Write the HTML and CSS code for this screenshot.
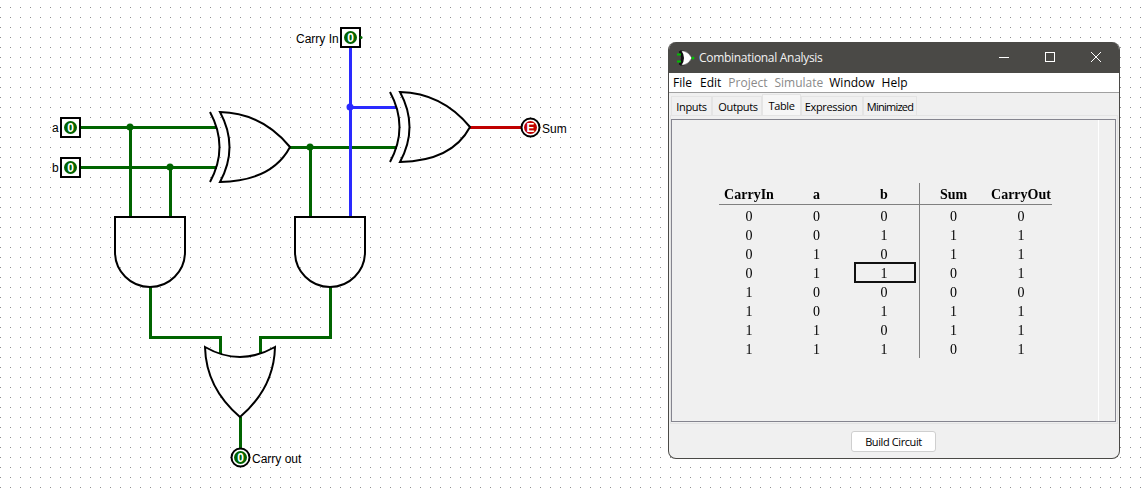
FILE: index.html
```html
<!DOCTYPE html>
<html lang="en">
<head>
<meta charset="utf-8">
<title>Full adder</title>
<link rel="stylesheet" href="styles.css">
</head>
<body>
<main class="desktop">
  <svg class="circuit" width="1147" height="493" viewBox="0 0 1147 493" xmlns="http://www.w3.org/2000/svg">
    <defs>
      <pattern id="grid" width="10" height="10" patternUnits="userSpaceOnUse" y="7">
        <rect width="1" height="1" fill="#8f8f8f"/>
      </pattern>
      <g id="xor" class="gate">
        <path d="M0 0 Q19 35 0 70"/>
        <path d="M10 0 Q29 35 10 70 Q62 69 80 35 Q52 1 10 0Z"/>
      </g>
      <g id="and" class="gate">
        <path d="M0 0H70V35A35 35 0 0 1 0 35Z"/>
      </g>
    </defs>
    <rect width="1147" height="493" fill="url(#grid)"/>

    <g class="wire wire-green">
      <path d="M80 127H217M80 167H217M130 127V217M170 167V217"/>
      <path d="M290 147H397M310 147V217"/>
      <path d="M150 287V337H220V354M330 287V337H260V354M240 417V448"/>
    </g>
    <g class="wire wire-blue"><path d="M350 47V217M350 107H397"/></g>
    <path class="wire wire-red" d="M470 127H522"/>

    <g class="node-green">
      <circle cx="130" cy="127" r="3.500"/><circle cx="170" cy="167" r="3.500"/><circle cx="310" cy="147" r="3.500"/>
    </g>
    <circle class="node-blue" cx="350" cy="107" r="3.500"/>

    <use href="#xor" x="210" y="112"/>
    <use href="#xor" x="390" y="92"/>
    <use href="#and" x="115" y="217"/>
    <use href="#and" x="295" y="217"/>
    <g class="gate"><path d="M205 347Q240 367 275 347Q274 388 240 417Q206 388 205 347Z"/></g>

    <g class="pin-box">
      <rect x="61" y="118" width="19" height="19"/>
      <rect x="61" y="158" width="19" height="19"/>
      <rect x="341" y="28" width="19" height="19"/>
    </g>
    <g class="pin-ring">
      <circle cx="240.500" cy="457.500" r="9"/>
      <circle cx="530.500" cy="127.500" r="9"/>
    </g>
    <g class="value-green">
      <circle cx="70.500" cy="127.500" r="6.500"/>
      <circle cx="70.500" cy="167.500" r="6.500"/>
      <circle cx="350.500" cy="37.500" r="6.500"/>
      <circle cx="240.500" cy="457.500" r="6.500"/>
      <circle cx="361" cy="37.500" r="1.500"/>
    </g>
    <circle class="value-red" cx="530.500" cy="127.500" r="6.500"/>

    <g class="value-text">
      <text x="70.500" y="132">0</text>
      <text x="70.500" y="172">0</text>
      <text x="350.500" y="42">0</text>
      <text x="240.500" y="462">0</text>
      <text x="530.500" y="132">E</text>
    </g>
    <g class="label">
      <text x="52" y="132">a</text>
      <text x="52" y="172">b</text>
      <text x="296" y="43">Carry In</text>
      <text x="542" y="133">Sum</text>
      <text x="252" y="463">Carry out</text>
    </g>
  </svg>

  <section class="window">
    <header class="titlebar">
      <svg class="app-icon" width="18" height="16" viewBox="0 0 18 16" xmlns="http://www.w3.org/2000/svg">
        <path d="M3 1H7Q12 2 15 8Q12 14 7 15H3Q7 8 3 1Z" fill="#fff" stroke="#111" stroke-width="0.500"/>
        <path d="M3 1Q8 8 3 15" fill="none" stroke="#111" stroke-width="3"/>
        <path d="M0 4.500H4M0 11.500H4" stroke="#00c000" stroke-width="2"/>
        <circle cx="16" cy="8" r="1.500" fill="#00c000"/>
      </svg>
      <h1 class="title">Combinational Analysis</h1>
      <div class="controls">
        <svg class="control" width="46" height="31" viewBox="0 0 46 31" xmlns="http://www.w3.org/2000/svg"><path d="M18 15.500H28"/></svg>
        <svg class="control" width="46" height="31" viewBox="0 0 46 31" xmlns="http://www.w3.org/2000/svg"><rect x="18.500" y="10.500" width="9" height="9"/></svg>
        <svg class="control" width="46" height="31" viewBox="0 0 46 31" xmlns="http://www.w3.org/2000/svg"><path d="M18 10L28 20M28 10L18 20"/></svg>
      </div>
    </header>
    <nav class="menubar">
      <span class="menu menu-file">File</span>
      <span class="menu">Edit</span>
      <span class="menu menu-off">Project</span>
      <span class="menu menu-off menu-sim">Simulate</span>
      <span class="menu">Window</span>
      <span class="menu">Help</span>
    </nav>
    <div class="tabs">
      <span class="tab tab-inputs">Inputs</span>
      <span class="tab tab-outputs">Outputs</span>
      <span class="tab tab-active">Table</span>
      <span class="tab tab-expr">Expression</span>
      <span class="tab tab-min">Minimized</span>
    </div>
    <div class="tabpanel">
      <div class="pane">
        <div class="view">
          <div class="truth">
            <div class="row row-head"><span>CarryIn</span><span>a</span><span>b</span><span>Sum</span><span>CarryOut</span></div>
            <div class="row"><span>0</span><span>0</span><span>0</span><span>0</span><span>0</span></div>
            <div class="row"><span>0</span><span>0</span><span>1</span><span>1</span><span>1</span></div>
            <div class="row"><span>0</span><span>1</span><span>0</span><span>1</span><span>1</span></div>
            <div class="row"><span>0</span><span>1</span><span class="cell-selected">1</span><span>0</span><span>1</span></div>
            <div class="row"><span>1</span><span>0</span><span>0</span><span>0</span><span>0</span></div>
            <div class="row"><span>1</span><span>0</span><span>1</span><span>1</span><span>1</span></div>
            <div class="row"><span>1</span><span>1</span><span>0</span><span>1</span><span>1</span></div>
            <div class="row"><span>1</span><span>1</span><span>1</span><span>0</span><span>1</span></div>
          </div>
        </div>
        <div class="scrolltrack"></div>
      </div>
    </div>
    <footer class="actions"><button class="build" type="button">Build Circuit</button></footer>
  </section>
</main>
</body>
</html>
```
FILE: styles.css
```css
* { box-sizing: border-box; }

html, body { margin: 0; padding: 0; }

body { background: #fff; overflow: hidden; }

.desktop { position: relative; width: 1147px; height: 493px; }

.circuit { display: block; }

.wire { fill: none; stroke-width: 3; shape-rendering: crispEdges; }
.wire-green { stroke: #006400; }
.wire-blue { stroke: #2a2aff; }
.wire-red { stroke: #c00000; }
.node-green { fill: #006400; }
.node-blue { fill: #2a2aff; }

.gate path { fill: none; stroke: #000; stroke-width: 2; }

.pin-box rect { fill: #fff; stroke: #000; stroke-width: 2; shape-rendering: crispEdges; }
.pin-ring circle { fill: #fff; stroke: #000; stroke-width: 2; }
.value-green { fill: #006400; }
.value-red { fill: #c00000; }
.value-text text { fill: #fff; font: 700 12px "Liberation Sans", sans-serif; text-anchor: middle; }
.label text { fill: #000; font: 12px "Liberation Sans", sans-serif; }

.window {
  position: absolute;
  left: 668px;
  top: 42px;
  width: 452px;
  height: 417px;
  display: flex;
  flex-direction: column;
  background: #f0f0f0;
  border: 1px solid #4a4946;
  border-top: 0;
  border-radius: 8px;
  overflow: hidden;
  font-family: "Open Sans", "Noto Sans", sans-serif;
  font-size: 11px;
  letter-spacing: -0.35px;
  color: #000;
}

.titlebar {
  display: flex;
  align-items: center;
  height: 31px;
  flex: none;
  background: #4a4946;
  padding-left: 8px;
  color: #f2f2f2;
}

.app-icon { flex: none; margin-right: 4px; }

.title { margin: 0; font: 400 12px "Open Sans", sans-serif; letter-spacing: -0.3px; flex: 1; }

.controls { display: flex; }

.control { fill: none; stroke: #fff; stroke-width: 1; }

.menubar {
  display: flex;
  align-items: center;
  height: 20px;
  flex: none;
  background: #fff;
  border-bottom: 1px solid #a0a0a0;
  padding-left: 4px;
  font-size: 12px;
  letter-spacing: 0;
  gap: 7px;
}

.menu-off { color: #8a8a8a; }
.menu-file { margin-right: 1px; }
.menu-sim { margin-right: -1px; }

.tabs {
  display: flex;
  align-items: flex-end;
  height: 22px;
  flex: none;
  padding-left: 2px;
}

.tab {
  display: flex;
  align-items: center;
  justify-content: center;
  height: 19px;
  background: #f0f0f0;
  border: 1px solid #e4e4e4;
  border-bottom: 0;
}

.tab-inputs { width: 41px; }
.tab-outputs { width: 50px; padding-left: 2px; }
.tab-active { width: 39px; height: 21px; background: #f6f6f6; }
.tab-expr { width: 62px; padding-right: 2px; }
.tab-min { width: 54px; letter-spacing: -0.75px; }

.tabpanel {
  flex: none;
  margin: 0 1px;
  height: 309px;
  border: 1px solid #e4e4e4;
  padding: 3px 1px 1px 0;
}

.pane {
  display: flex;
  height: 100%;
  border: 1px solid #85858f;
  background: #f0f0f0;
}

.view {
  flex: 1;
  padding: 63px 0 0 47px;
}

.scrolltrack {
  flex: none;
  width: 17px;
  border-left: 1px solid #fff;
}

.truth {
  position: relative;
  width: 333px;
  height: 175px;
  font: 14px "Liberation Serif", serif;
  letter-spacing: 0;
  color: #000;
  will-change: transform;
}

.truth::before {
  content: "";
  position: absolute;
  left: 200px;
  top: 0;
  bottom: 0;
  width: 1px;
  background: #808080;
}

.row {
  display: grid;
  grid-template-columns: 60px 4px 67px 68px 2px 67px 3px 62px;
  height: 19px;
  text-align: center;
}

.row > span { padding-top: 2px; line-height: 17px; }
.row > span:nth-child(1) { grid-column: 1; }
.row > span:nth-child(2) { grid-column: 3; }
.row > span:nth-child(3) { grid-column: 4; }
.row > span:nth-child(4) { grid-column: 6; }
.row > span:nth-child(5) { grid-column: 8; }

.row-head {
  height: 22px;
  font-weight: 700;
  border-bottom: 1px solid #808080;
  margin-bottom: 1px;
}

.row-head > span { padding-top: 3px; line-height: 18px; }

.cell-selected { position: relative; }

.cell-selected::after {
  content: "";
  position: absolute;
  left: 4px;
  right: 2px;
  top: -1px;
  bottom: -1px;
  border: 2px solid #111;
}

.actions {
  flex: 1;
  display: flex;
  justify-content: center;
  align-items: flex-start;
  padding: 7px 1px 0 0;
}

.build {
  width: 85px;
  height: 21px;
  padding: 0;
  background: #fff;
  border: 1px solid #cfcfcf;
  border-radius: 3px;
  font: 11px "Open Sans", sans-serif;
  letter-spacing: -0.4px;
  color: #000;
}
```
